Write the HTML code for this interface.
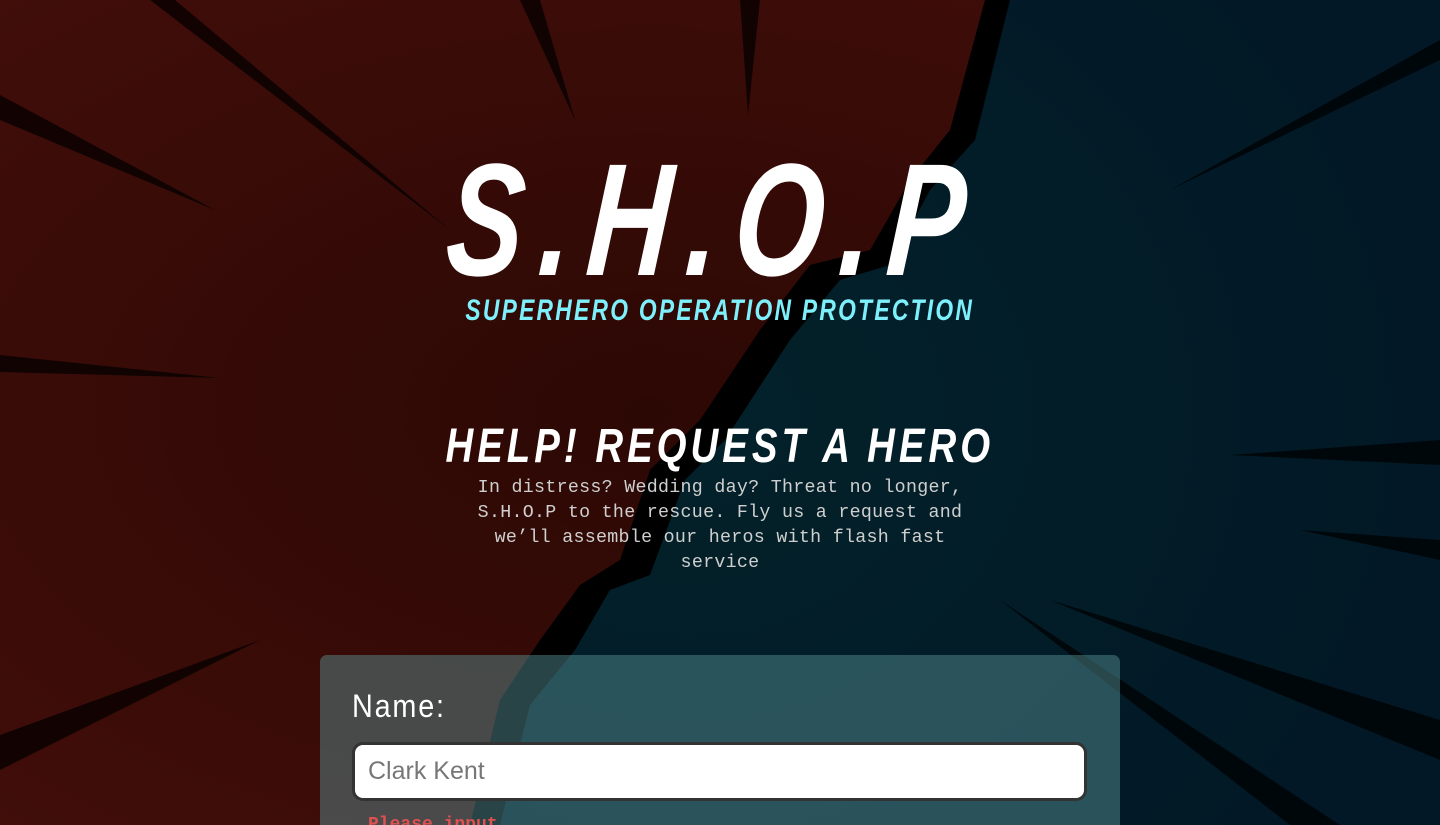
<!DOCTYPE html>
<html><head><meta charset="utf-8"><style>
html,body{margin:0;padding:0;width:1440px;height:825px;overflow:hidden;background:#1a0a08;position:relative}
.bg{position:absolute;left:0;top:0}
.t{position:absolute;left:0;width:1440px;text-align:center;color:#fff;font-family:"Liberation Sans",sans-serif;font-weight:bold;font-style:italic}
#shop{top:140px;font-size:160px;line-height:160px;letter-spacing:22px;transform:scaleX(0.72) skewX(-6deg);transform-origin:722px 0}
#sub{top:294px;font-size:30px;line-height:34px;color:#7ef0fb;letter-spacing:3px;transform:scaleX(0.76);transform-origin:719px 0}
#help{top:420px;font-size:48px;line-height:54px;letter-spacing:5px;transform:scaleX(0.8);transform-origin:719px 0}
#p{position:absolute;top:476px;left:450px;width:540px;text-align:center;font-family:"Liberation Mono",monospace;font-size:18.3px;line-height:25px;color:#cfcfcf;letter-spacing:0.3px}
.card{position:absolute;left:320px;top:655px;width:800px;height:170px;border-radius:7px 7px 0 0;background:rgba(90,150,155,0.45)}
.lab{position:absolute;left:352px;top:688px;font-family:"Liberation Sans",sans-serif;font-size:32px;color:#fff;letter-spacing:2px;transform:scaleX(0.9);transform-origin:0 0}
.inp{position:absolute;left:352px;top:742px;height:53px;border:3px solid #333;border-radius:11px;background:#fff;font-family:"Liberation Sans",sans-serif;font-size:25px;color:#777;line-height:53px;padding-left:13px;width:716px}
.err{position:absolute;left:368px;top:815px;font-family:"Liberation Mono",monospace;font-size:18px;color:#e05050;font-weight:bold}
</style></head><body>
<svg class="bg" width="1440" height="825" viewBox="0 0 1440 825">
<defs>
<radialGradient id="r" cx="0.45" cy="0.5" r="0.7"><stop offset="0" stop-color="#2c0804"/><stop offset="1" stop-color="#420e0a"/></radialGradient>
<radialGradient id="b" cx="0.2" cy="0.5" r="0.8"><stop offset="0" stop-color="#03222a"/><stop offset="1" stop-color="#021826"/></radialGradient>
</defs>
<rect width="1440" height="825" fill="url(#r)"/>
<polygon points="985,0 1440,0 1440,825 470,825 500,700 540,640 580,585 620,560 650,470 700,420 760,330 810,265 870,250 910,180 950,130" fill="#000"/>
<polygon points="1010,0 1440,0 1440,825 500,825 530,705 575,650 610,590 650,575 685,480 725,440 790,340 840,280 890,265 930,190 975,140" fill="url(#b)"/>
<g fill="#000" opacity="0.7">
<polygon points="0,355 220,378 0,372"/>
<polygon points="0,95 215,210 0,120"/>
<polygon points="0,735 260,640 0,770"/>
<polygon points="150,0 450,230 175,0"/>
<polygon points="520,0 575,120 540,0"/>
<polygon points="740,0 748,115 760,0"/>
<polygon points="1440,40 1170,190 1440,60"/>
<polygon points="1440,440 1230,455 1440,465"/>
<polygon points="1440,720 1050,600 1440,760"/>
<polygon points="1000,600 1340,825 1290,825"/>
<polygon points="1440,540 1300,530 1440,560"/>
</g>
</svg>
<div class="t" id="shop">S.H.O.P</div>
<div class="t" id="sub">SUPERHERO OPERATION PROTECTION</div>
<div class="t" id="help">HELP! REQUEST A HERO</div>
<div id="p">In distress? Wedding day? Threat no longer, S.H.O.P to the rescue. Fly us a request and we’ll assemble our heros with flash fast service</div>
<div class="card"></div>
<div class="lab">Name:</div>
<div class="inp">Clark Kent</div>
<div class="err">Please input</div>
</body></html>
